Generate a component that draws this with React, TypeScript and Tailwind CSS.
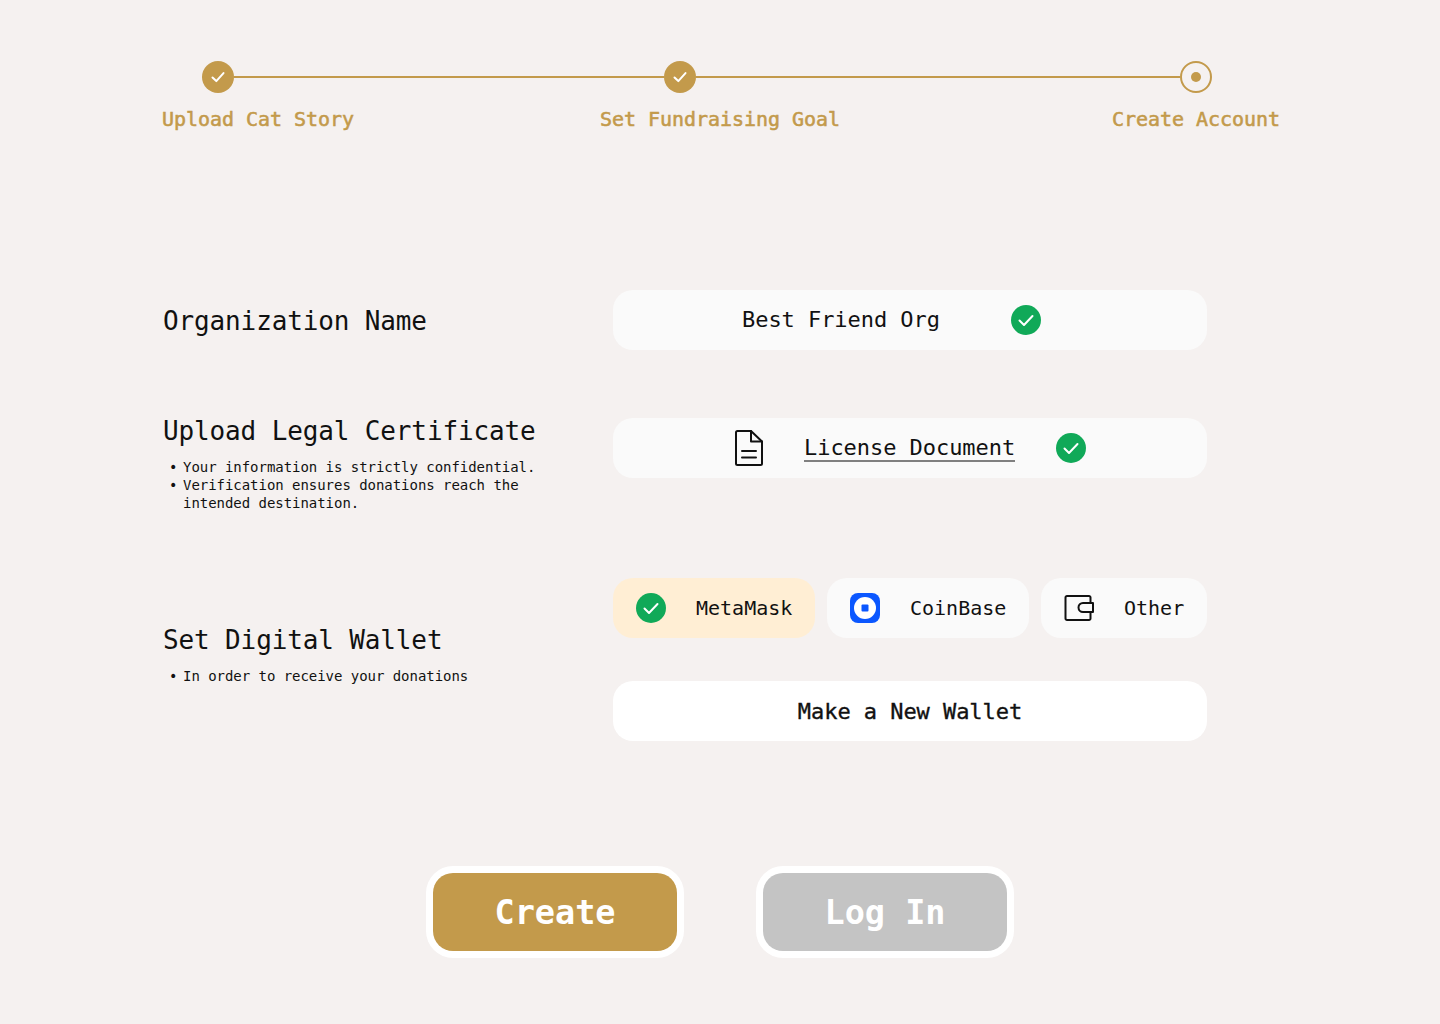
import React from "react";

function CheckBadge() {
  return (
    <svg width="30" height="30" viewBox="0 0 30 30" className="shrink-0">
      <circle cx="15" cy="15" r="15" fill="#10A958" />
      <path d="M8.500 15.500l4.500 4.500 8.500-9" fill="none" stroke="#fff" strokeWidth="2" strokeLinecap="round" strokeLinejoin="round" />
    </svg>
  );
}

function StepDone() {
  return (
    <svg width="32" height="32" viewBox="0 0 32 32" className="shrink-0">
      <circle cx="16" cy="16" r="16" fill="#C39A4B" />
      <path d="M10.500 16.500l3.800 3.600 7.200-8" fill="none" stroke="#fff" strokeWidth="2" strokeLinecap="round" strokeLinejoin="round" />
    </svg>
  );
}

function StepCurrent() {
  return (
    <svg width="32" height="32" viewBox="0 0 32 32" className="shrink-0">
      <circle cx="16" cy="16" r="15" fill="none" stroke="#C39A4B" strokeWidth="2" />
      <circle cx="16" cy="16" r="5" fill="#C39A4B" />
    </svg>
  );
}

function FileIcon() {
  return (
    <svg width="28" height="36" viewBox="0 0 28 36" className="shrink-0" fill="none" stroke="#111" strokeWidth="2" strokeLinejoin="round" strokeLinecap="round">
      <path d="M2.500 1H16L27 11.500v22a1.500 1.500 0 0 1-1.500 1.500h-23A1.500 1.500 0 0 1 1 33.500v-31A1.500 1.500 0 0 1 2.500 1z" />
      <path d="M16 1V11.500H27" />
      <path d="M7 21h14M7 27.500h14" />
    </svg>
  );
}

function CoinbaseIcon() {
  return (
    <svg width="30" height="30" viewBox="0 0 30 30" className="shrink-0">
      <rect width="30" height="30" rx="8" fill="#0B57FF" />
      <circle cx="15" cy="15" r="11" fill="#fff" />
      <rect x="11.500" y="11.500" width="7" height="7" rx="1" fill="#0B57FF" />
    </svg>
  );
}

function WalletIcon() {
  return (
    <svg width="30" height="26" viewBox="0 0 30 26" className="shrink-0" fill="none" stroke="#111" strokeWidth="2" strokeLinejoin="round">
      <path d="M26.500 8V2.500A1.500 1.500 0 0 0 25 1H3a1.500 1.500 0 0 0-1.500 1.500v21A1.500 1.500 0 0 0 3 25h22a1.500 1.500 0 0 0 1.500-1.500V17" />
      <path d="M19 8h10v9H19a4.500 4.500 0 0 1 0-9z" />
    </svg>
  );
}

function Bullets({ items }: { items: string[] }) {
  return (
    <ul className="mt-[14px] w-[380px] text-[14px] leading-[18px] tracking-[-0.04px] text-[#111]">
      {items.map((t) => (
        <li key={t} className="flex">
          <span className="w-[20px] pl-[6px] shrink-0">•</span>
          <span>{t}</span>
        </li>
      ))}
    </ul>
  );
}

const fieldClass = "h-[60px] rounded-[20px] bg-[#FAFAFA] flex items-center";
const headingClass = "text-[26px] leading-[26px] font-normal tracking-[-0.13px]";

export default function App() {
  return (
    <div className="min-h-[1024px] bg-[#F5F1F0] text-[#111] font-['DejaVu_Sans_Mono','Liberation_Mono',monospace] pt-[61px]">
      <div className="w-[1118px] ml-[162px]">
        <div className="flex items-center pl-[40px] pr-[68px]">
          <StepDone />
          <div className="w-[430px] h-[2px] bg-[#C39A4B]" />
          <StepDone />
          <div className="w-[484px] h-[2px] bg-[#C39A4B]" />
          <StepCurrent />
        </div>
        <div className="mt-[14px] flex text-[20px] leading-[24px] tracking-[-0.04px] text-[#C39A4B] [-webkit-text-stroke:0.55px_#C39A4B]">
          <span>Upload Cat Story</span>
          <span className="ml-[246px]">Set Fundraising Goal</span>
          <span className="ml-auto">Create Account</span>
        </div>
      </div>

      <div className="ml-[163px] mt-[159px] w-[1044px]">
        <div className="flex items-center">
          <h2 className={`w-[450px] pt-[2px] ${headingClass}`}>Organization Name</h2>
          <div className={`${fieldClass} w-[594px] pl-[129px] gap-[71px] text-[22px] leading-[26px] tracking-[-0.05px]`}>
            <span>Best Friend Org</span>
            <CheckBadge />
          </div>
        </div>

        <div className="mt-[68px] flex items-start">
          <div className="w-[450px]">
            <h2 className={headingClass}>Upload Legal Certificate</h2>
            <Bullets items={["Your information is strictly confidential.", "Verification ensures donations reach the intended destination."]} />
          </div>
          <div className={`${fieldClass} w-[594px] pl-[122px] text-[22px] tracking-[-0.05px]`}>
            <FileIcon />
            <span className="ml-[41px] mr-[41px] mt-[2px] border-b-2 border-[#808080] leading-[24px]">License Document</span>
            <CheckBadge />
          </div>
        </div>

        <div className="mt-[66px] flex items-start">
          <div className="w-[450px] pt-[49px]">
            <h2 className={headingClass}>Set Digital Wallet</h2>
            <Bullets items={["In order to receive your donations"]} />
          </div>
          <div className="w-[594px]">
            <div className="flex gap-[12px] text-[20px]">
              <div className="h-[60px] w-[202px] rounded-[20px] bg-[#FFEED4] flex items-center pl-[23px] gap-[30px]">
                <CheckBadge />
                <span>MetaMask</span>
              </div>
              <div className={`${fieldClass} w-[202px] pl-[23px] gap-[30px]`}>
                <CoinbaseIcon />
                <span>CoinBase</span>
              </div>
              <div className={`${fieldClass} w-[166px] pl-[23px] gap-[30px]`}>
                <WalletIcon />
                <span>Other</span>
              </div>
            </div>
            <button className="mt-[43px] h-[60px] w-full rounded-[20px] bg-white text-[22px] tracking-[-0.05px] text-[#111] [-webkit-text-stroke:0.35px_#111]">Make a New Wallet</button>
          </div>
        </div>
      </div>

      <div className="mt-[125px] flex justify-center gap-[72px]">
        <div className="w-[258px] h-[92px] p-[7px] rounded-[27px] bg-white">
          <button className="w-full h-full pt-[3px] rounded-[20px] bg-[#C39A4B] text-white text-[33.5px] font-bold">Create</button>
        </div>
        <div className="w-[258px] h-[92px] p-[7px] rounded-[27px] bg-white">
          <button className="w-full h-full pt-[3px] rounded-[20px] bg-[#C4C4C4] text-white text-[33.5px] font-bold">Log In</button>
        </div>
      </div>
    </div>
  );
}
